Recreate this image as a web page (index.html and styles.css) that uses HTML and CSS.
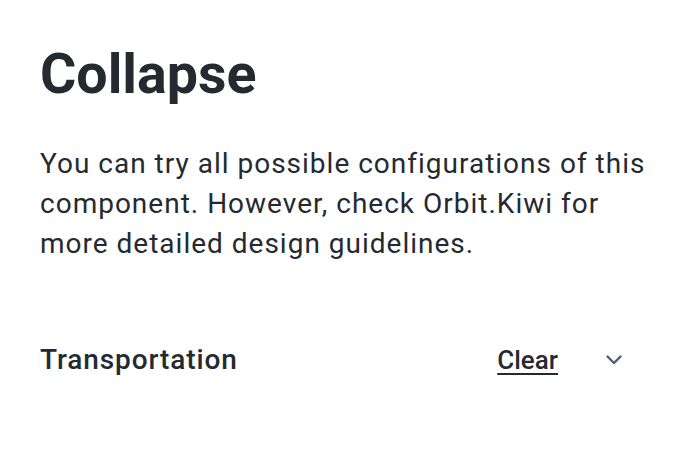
FILE: index.html
```html
<!DOCTYPE html>
<html>
<head>
<meta charset="utf-8">
<link rel="stylesheet" href="styles.css">
</head>
<body>
<div class="page">
  <h1 class="title">Collapse</h1>
  <p class="desc">You can try all possible configurations of this component. However, check Orbit.Kiwi for more detailed design guidelines.</p>
  <div class="collapse">
    <div class="label">Transportation</div>
    <div class="actions">
      <a class="clear">Clear</a>
      <svg class="chev" width="24" height="24" viewBox="0 0 24 24"><path d="M5.5 8.5 L12 15 L18.5 8.5" fill="none" stroke="#4f5e71" stroke-width="2.4" stroke-linecap="round" stroke-linejoin="round"/></svg>
    </div>
  </div>
</div>
</body>
</html>
```

FILE: styles.css
```css
html, body { margin: 0; padding: 0; background: #fff; }
body { font-family: Roboto, "Noto Sans", sans-serif; color: #252a31; }
.page { padding: 39px 40px 0 40px; }
.title { margin: 0; font-size: 55.5px; font-weight: 700; line-height: 72px; }
.desc { margin: 33px 0 0 0; font-size: 28px; line-height: 40px; font-weight: 400; letter-spacing: 1px; }
.collapse { margin-top: 76px; display: flex; align-items: center; justify-content: space-between; padding-right: 20px; }
.label { font-size: 28px; font-weight: 500; line-height: 40px; letter-spacing: 0.9px; }
.actions { display: flex; align-items: center; gap: 44px; }
.clear { font-size: 26px; font-weight: 500; text-decoration: underline; text-decoration-thickness: 2px; text-underline-offset: 4px; color: #252a31; }
.chev { display: block; }
```
